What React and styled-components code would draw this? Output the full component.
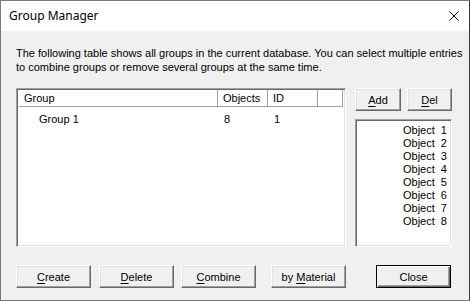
import React from "react";
import styled, { createGlobalStyle, css } from "styled-components";

const Global = createGlobalStyle`
  html, body { margin: 0; padding: 0; background: #f0f0f0; }
  * { box-sizing: border-box; }
`;

const Window = styled.div`
  width: 470px;
  height: 301px;
  border: 1px solid #7a7a7a;
  border-right-color: #3c3c3c;
  display: flex;
  flex-direction: column;
  font-family: "Liberation Sans", Arial, sans-serif;
  font-size: 11px;
  color: #000;
  background: #f0f0f0;
`;

const TitleBar = styled.div`
  height: 30px;
  background: #fff;
  display: flex;
  align-items: center;
  justify-content: space-between;
  padding: 0 10px 0 8px;
  flex-shrink: 0;
`;

const Title = styled.span`
  font-family: "Noto Sans", "Open Sans", sans-serif;
  font-size: 12px;
  margin-top: -1px;
`;

const CloseX = styled.svg`
  width: 10px;
  height: 10px;
  margin-top: -1px;
`;

const Body = styled.div`
  flex: 1;
  padding: 15px 17px 0 15px;
  display: flex;
  flex-direction: column;
`;

const Description = styled.p`
  margin: 0;
  line-height: 14px;
  white-space: nowrap;
`;

const Main = styled.div`
  display: flex;
  margin-top: 14px;
  gap: 9px;
`;

const sunken = css`
  border: 1px solid;
  border-color: #a0a0a0 #fff #fff #a0a0a0;
  box-shadow: inset 1px 1px 0 #696969, inset -1px -1px 0 #e3e3e3;
  background: #fff;
`;

const ListView = styled.div`
  ${sunken};
  width: 330px;
  height: 159px;
  padding: 1px 2px 2px 2px;
`;

const HeaderRow = styled.div`
  display: flex;
  height: 17px;
`;

const HeaderCell = styled.div`
  width: ${(p) => p.$w}px;
  ${(p) => p.$grow && "flex: 1;"}
  background: #fff;
  border-right: 1px solid #a0a0a0;
  border-bottom: 1px solid #a0a0a0;
  padding-left: ${(p) => p.$pad ?? 5}px;
  line-height: 16px;
`;

const Row = styled.div`
  display: flex;
  height: 15px;
  line-height: 15px;
  margin-top: 5px;
`;

const Cell = styled.div`
  width: ${(p) => p.$w}px;
  padding-left: ${(p) => p.$pad}px;
`;

const Side = styled.div`
  width: 97px;
  display: flex;
  flex-direction: column;
`;

const SideButtons = styled.div`
  display: flex;
  justify-content: space-between;
`;

const Button = styled.button`
  width: ${(p) => p.$w}px;
  height: 23px;
  padding: 0;
  font-family: "Liberation Sans", Arial, sans-serif;
  font-size: 11px;
  color: #000;
  background: #f0f0f0;
  border: 1px solid;
  border-color: #fff #696969 #696969 #fff;
  box-shadow: inset -1px -1px 0 #a0a0a0, inset 1px 1px 0 #e3e3e3;
  ${(p) =>
    p.$default &&
    css`
      border: 1px solid #000;
      box-shadow: inset 1px 1px 0 #fff, inset -1px -1px 0 #696969,
        inset -2px -2px 0 #a0a0a0;
    `}
  outline: none;
  u { text-decoration: underline; text-underline-offset: 2px; }
`;

const ObjectList = styled.div`
  ${sunken};
  margin-top: 8px;
  height: 128px;
  padding: 4px 4px 0 0;
  display: flex;
  flex-direction: column;
  align-items: flex-end;
`;

const ObjectItem = styled.div`
  line-height: 13px;
  height: 13px;
  white-space: pre;
`;

const Footer = styled.div`
  display: flex;
  margin-top: 18px;
`;

const FooterButton = styled(Button)`
  margin-left: ${(p) => p.$ml || 0}px;
`;

export default function App() {
  const objects = [1, 2, 3, 4, 5, 6, 7, 8];
  return (
    <>
      <Global />
      <Window>
        <TitleBar>
          <Title>Group Manager</Title>
          <CloseX viewBox="0 0 10 10">
            <path d="M0.5 0.5 L9.5 9.5 M9.5 0.5 L0.5 9.5" stroke="#000" strokeWidth="1" fill="none" />
          </CloseX>
        </TitleBar>
        <Body>
          <Description>
            The following table shows all groups in the current database. You can select multiple entries
            <br />
            to combine groups or remove several groups at the same time.
          </Description>
          <Main>
            <ListView>
              <HeaderRow>
                <HeaderCell $w={199}>Group</HeaderCell>
                <HeaderCell $w={50}>Objects</HeaderCell>
                <HeaderCell $w={50}>ID</HeaderCell>
                <HeaderCell $grow />
              </HeaderRow>
              <Row>
                <Cell $w={199} $pad={20}>Group 1</Cell>
                <Cell $w={50} $pad={6}>8</Cell>
                <Cell $w={50} $pad={6}>1</Cell>
              </Row>
            </ListView>
            <Side>
              <SideButtons>
                <Button $w={46}><u>A</u>dd</Button>
                <Button $w={45}><u>D</u>el</Button>
              </SideButtons>
              <ObjectList>
                {objects.map((n) => (
                  <ObjectItem key={n}>{`Object  ${n}`}</ObjectItem>
                ))}
              </ObjectList>
            </Side>
          </Main>
          <Footer>
            <FooterButton $w={75}><u>C</u>reate</FooterButton>
            <FooterButton $w={75} $ml={8}><u>D</u>elete</FooterButton>
            <FooterButton $w={75} $ml={7}><u>C</u>ombine</FooterButton>
            <FooterButton $w={75} $ml={15}>by <u>M</u>aterial</FooterButton>
            <FooterButton $w={75} $ml={30} $default>Close</FooterButton>
          </Footer>
        </Body>
      </Window>
    </>
  );
}
